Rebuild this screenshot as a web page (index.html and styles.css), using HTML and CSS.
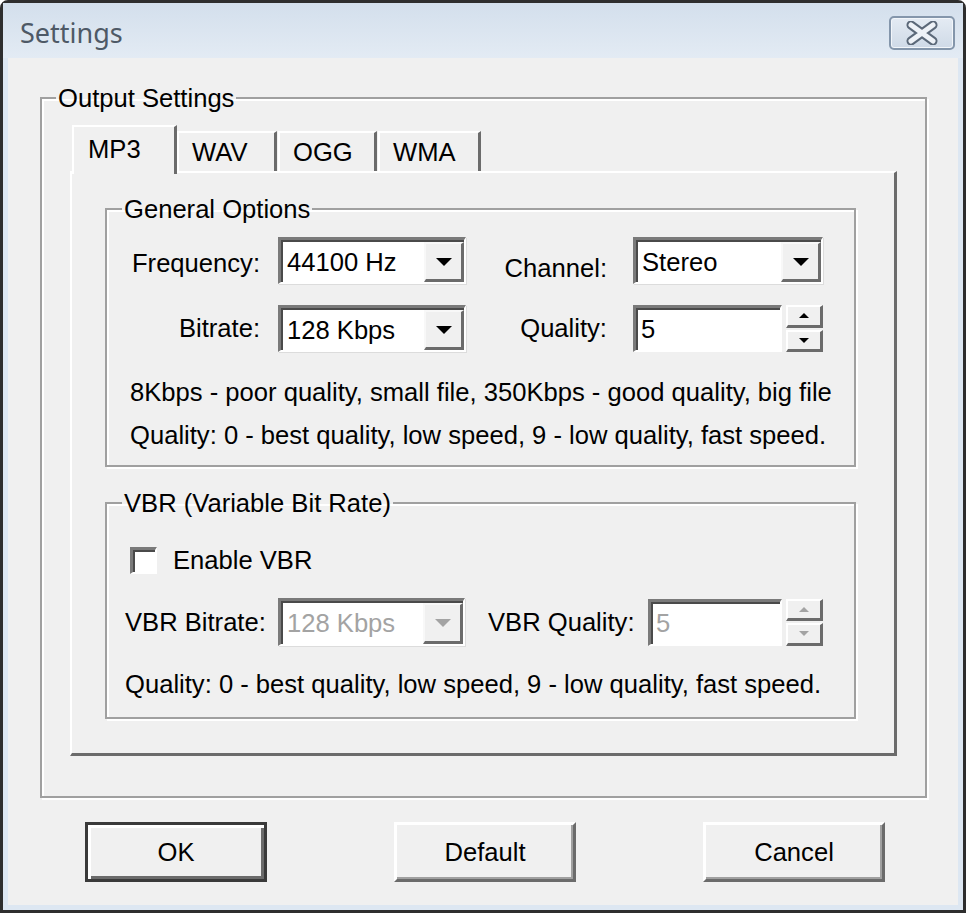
FILE: index.html
```html
<!DOCTYPE html>
<html lang="en">

<head>
    <meta charset="UTF-8">
    <meta name="viewport" content="width=device-width, initial-scale=1.0">
    <title>Settings</title>

    <link rel="stylesheet" href="styles.css">
</head>

<body>

    <div class="window">
        <!-- Title Bar -->
        <div class="titlebar">
            <span class="title">Settings</span>
            <button type="button" class="close-btn" aria-label="Close">
                <svg width="40" height="24" viewBox="0 0 40 24">
                    <path d="M9 4 L31 20 M31 4 L9 20" stroke="#5b6878" stroke-width="9" stroke-linecap="round" fill="none" />
                    <path d="M9 4 L31 20 M31 4 L9 20" stroke="#eef2f7" stroke-width="5" stroke-linecap="round" fill="none" />
                </svg>
            </button>
        </div>

        <div class="client">
            <fieldset class="group output-group">
                <legend>Output Settings</legend>

                <!-- Format Tabs -->
                <div class="tab-strip">
                    <div class="tab active">MP3</div>
                    <div class="tab">WAV</div>
                    <div class="tab">OGG</div>
                    <div class="tab">WMA</div>
                </div>

                <div class="tab-panel">
                    <!-- General Options -->
                    <fieldset class="group general-group">
                        <legend>General Options</legend>
                        <div class="option-grid">
                            <label class="lbl lbl-right lbl-frequency">Frequency:</label>
                            <div class="combo"><span class="combo-text">44100 Hz</span><span class="drop-btn"><i class="arrow"></i></span></div>
                            <label class="lbl lbl-right lbl-channel">Channel:</label>
                            <div class="combo combo-wide"><span class="combo-text">Stereo</span><span class="drop-btn"><i class="arrow"></i></span></div>

                            <label class="lbl lbl-right">Bitrate:</label>
                            <div class="combo"><span class="combo-text">128 Kbps</span><span class="drop-btn"><i class="arrow"></i></span></div>
                            <label class="lbl lbl-right">Quality:</label>
                            <div class="spin-field">
                                <div class="edit">5</div>
                                <div class="spinner">
                                    <span class="spin-btn"><i class="arrow-up"></i></span>
                                    <span class="spin-btn"><i class="arrow-small"></i></span>
                                </div>
                            </div>
                        </div>
                        <p class="note note-indent">8Kbps - poor quality, small file, 350Kbps - good quality, big file</p>
                        <p class="note note-indent">Quality: 0 - best quality, low speed, 9 - low quality, fast speed.</p>
                    </fieldset>

                    <!-- VBR Options -->
                    <fieldset class="group vbr-group">
                        <legend>VBR (Variable Bit Rate)</legend>
                        <label class="check-row">
                            <span class="checkbox"></span>
                            <span>Enable VBR</span>
                        </label>
                        <div class="vbr-row">
                            <label class="lbl vbr-lbl">VBR Bitrate:</label>
                            <div class="combo combo-vbr disabled"><span class="combo-text">128 Kbps</span><span class="drop-btn"><i class="arrow"></i></span></div>
                            <label class="lbl vbr-quality-lbl">VBR Quality:</label>
                            <div class="spin-field disabled">
                                <div class="edit edit-vbr">5</div>
                                <div class="spinner">
                                    <span class="spin-btn"><i class="arrow-up"></i></span>
                                    <span class="spin-btn"><i class="arrow-small"></i></span>
                                </div>
                            </div>
                        </div>
                        <p class="note">Quality: 0 - best quality, low speed, 9 - low quality, fast speed.</p>
                    </fieldset>
                </div>
            </fieldset>

            <!-- Dialog Buttons -->
            <div class="buttons">
                <button type="button" class="btn btn-default">OK</button>
                <button type="button" class="btn">Default</button>
                <button type="button" class="btn">Cancel</button>
            </div>
        </div>
    </div>

</body>

</html>
```

FILE: styles.css
```css
/* General Styles */
body {
    margin: 0;
    background: #ffffff;
    font-family: 'Liberation Sans', Arial, sans-serif;
    font-size: 25.6px;
    color: #000;
}

/* Window Frame */
.window {
    width: 966px;
    height: 913px;
    box-sizing: border-box;
    border: 3px solid #2e2e2e;
    border-radius: 8px 8px 0 0;
    background: #dde7f2;
    padding: 0 5px 5px 5px;
    display: flex;
    flex-direction: column;
}

/* Title Bar */
.titlebar {
    height: 55px;
    display: flex;
    align-items: flex-start;
    justify-content: space-between;
    padding-left: 12px;
    padding-right: 8px;
    margin: 0 -5px;
    background: linear-gradient(to bottom, #d3dfec, #e3ebf4);
}

.title {
    font-family: 'Noto Sans', sans-serif;
    font-size: 27px;
    line-height: 36px;
    color: #4e5966;
    margin-left: 5px;
    margin-top: 12px;
}

.close-btn {
    width: 66px;
    height: 34px;
    margin-top: 13px;
    border: 2px solid #8496ab;
    border-radius: 5px;
    background: linear-gradient(to bottom, #e4ebf3, #cfdae7);
    box-shadow: inset 0 0 0 1px #f2f6fa;
    display: flex;
    align-items: center;
    justify-content: center;
    padding: 0;
}

/* Client Area */
.client {
    flex: 1;
    background: #f0f0f0;
    padding: 26px 31px 0 32px;
}

/* Etched Group Box */
.group {
    margin: 0;
    border: 2px solid #a0a0a0;
    box-shadow: inset 2px 2px 0 #ffffff, 2px 2px 0 #ffffff;
    padding: 0;
}

.group legend {
    padding: 0 2px;
    line-height: 28px;
}

.output-group {
    padding: 16px 28px 40px 28px;
}

.output-group > legend {
    margin-left: -14px;
}

/* Tabs */
.tab-strip {
    display: flex;
    align-items: flex-end;
    height: 46px;
    margin-bottom: -3px;
    position: relative;
    z-index: 1;
}

.tab {
    height: 40px;
    box-sizing: border-box;
    padding-left: 13px;
    line-height: 38px;
    border-top: 2px solid #ffffff;
    border-left: 2px solid #ffffff;
    border-right: 3px solid #6b6b6b;
    background: #f0f0f0;
    margin-bottom: 3px;
}

.tab:nth-child(2) {
    width: 100px;
}

.tab:nth-child(3) {
    width: 99px;
    margin-left: 1px;
}

.tab:nth-child(4) {
    width: 103px;
    margin-left: 1px;
}

.tab.active {
    width: 105px;
    height: 49px;
    margin-bottom: 0;
    margin-left: 2px;
    padding-left: 14px;
    line-height: 44px;
}

.tab-panel {
    border-top: 2px solid #ffffff;
    border-left: 2px solid #ffffff;
    border-right: 3px solid #6b6b6b;
    border-bottom: 3px solid #6b6b6b;
    padding: 22px 38px 34px 33px;
}

/* Group contents */
.general-group {
    padding: 14px 0 8px 18px;
}

.vbr-group {
    margin-top: 22px;
    padding: 26px 0 11px 18px;
}

.general-group > legend,
.vbr-group > legend {
    margin-left: -3px;
}

.option-grid {
    display: grid;
    grid-template-columns: 153px 188px 167px 190px;
    grid-auto-rows: 47px;
    row-gap: 21px;
    align-items: center;
}

.lbl {
    white-space: nowrap;
}

.lbl-right {
    text-align: right;
    padding-right: 18px;
}

.option-grid .lbl-right:nth-of-type(even) {
    padding-right: 26px;
}

.lbl-frequency {
    margin-top: 6px;
}

.lbl-channel {
    margin-top: 16px;
}

/* Sunken Combo Box */
.combo {
    height: 47px;
    box-sizing: border-box;
    display: flex;
    background: #ffffff;
    border-top: 3px solid #7a7a7a;
    border-left: 3px solid #7a7a7a;
    border-right: 2px solid #ffffff;
    border-bottom: 2px solid #ffffff;
    box-shadow: inset 2px 2px 0 #4a4a4a, 1px 1px 0 #dcdcdc;
}

.combo-text {
    flex: 1;
    padding-left: 6px;
    padding-top: 2px;
    line-height: 40px;
}

.drop-btn {
    width: 40px;
    box-sizing: border-box;
    background: #f0f0f0;
    border-top: 2px solid #f8f8f8;
    border-left: 2px solid #f8f8f8;
    border-right: 3px solid #6b6b6b;
    border-bottom: 3px solid #6b6b6b;
    margin: 2px 0 0 2px;
    display: flex;
    align-items: center;
    justify-content: center;
}

.arrow {
    width: 0;
    height: 0;
    border-left: 8px solid transparent;
    border-right: 8px solid transparent;
    border-top: 8px solid #000;
}

.arrow-small,
.arrow-up {
    width: 0;
    height: 0;
    border-left: 5px solid transparent;
    border-right: 5px solid transparent;
}

.arrow-small {
    border-top: 5px solid #000;
}

.arrow-up {
    border-bottom: 5px solid #000;
}

/* Edit Field with Spinner */
.spin-field {
    display: flex;
    height: 47px;
    gap: 4px;
}

.edit {
    width: 149px;
    box-sizing: border-box;
    background: #ffffff;
    border-top: 3px solid #7a7a7a;
    border-left: 3px solid #7a7a7a;
    border-right: 2px solid #ffffff;
    border-bottom: 2px solid #ffffff;
    box-shadow: inset 2px 2px 0 #4a4a4a;
    padding-left: 5px;
    line-height: 42px;
}

.spinner {
    width: 37px;
    display: flex;
    flex-direction: column;
    gap: 2px;
}

.spin-btn {
    flex: 1;
    box-sizing: border-box;
    background: #f0f0f0;
    border-top: 2px solid #ffffff;
    border-left: 2px solid #ffffff;
    border-right: 3px solid #6b6b6b;
    border-bottom: 3px solid #6b6b6b;
    display: flex;
    align-items: center;
    justify-content: center;
}

/* Help text */
.note {
    margin: 0;
    line-height: 43px;
    white-space: nowrap;
}

.general-group .note:first-of-type {
    margin-top: 19px;
}

.note-indent {
    padding-left: 5px;
}

/* Checkbox */
.check-row {
    display: flex;
    align-items: center;
    gap: 16px;
    height: 34px;
    padding-left: 5px;
}

.checkbox {
    width: 27px;
    height: 27px;
    box-sizing: border-box;
    background: #ffffff;
    border-top: 3px solid #7a7a7a;
    border-left: 3px solid #7a7a7a;
    border-right: 2px solid #ffffff;
    border-bottom: 2px solid #ffffff;
    box-shadow: inset 2px 2px 0 #4a4a4a;
}

/* VBR row */
.vbr-row {
    display: flex;
    align-items: center;
    margin-top: 21px;
    height: 48px;
}

.vbr-lbl {
    width: 153px;
}

.combo-vbr {
    width: 187px;
    height: 48px;
}

.vbr-quality-lbl {
    width: 160px;
    padding-left: 23px;
}

.edit-vbr {
    width: 134px;
}

.vbr-group .note {
    margin-top: 17px;
}

/* Disabled controls */
.disabled .combo-text,
.disabled .edit {
    color: #a3a3a3;
}

.disabled .arrow {
    border-top-color: #a3a3a3;
}

.disabled .arrow-small {
    border-top-color: #a3a3a3;
}

.disabled .arrow-up {
    border-bottom-color: #a3a3a3;
}

/* Dialog Buttons */
.buttons {
    display: flex;
    justify-content: space-between;
    padding: 24px 42px 0 45px;
}

.btn {
    width: 182px;
    height: 60px;
    font-family: inherit;
    font-size: 25.6px;
    color: #000;
    background: #f0f0f0;
    border-top: 3px solid #ffffff;
    border-left: 3px solid #ffffff;
    border-right: 3px solid #6b6b6b;
    border-bottom: 3px solid #6b6b6b;
    box-shadow: inset -2px -2px 0 #a0a0a0;
    padding: 0;
}

.btn-default {
    border: 3px solid #3a3a3a;
    box-shadow: inset 3px 3px 0 #ffffff, inset -3px -3px 0 #6b6b6b;
}
```
